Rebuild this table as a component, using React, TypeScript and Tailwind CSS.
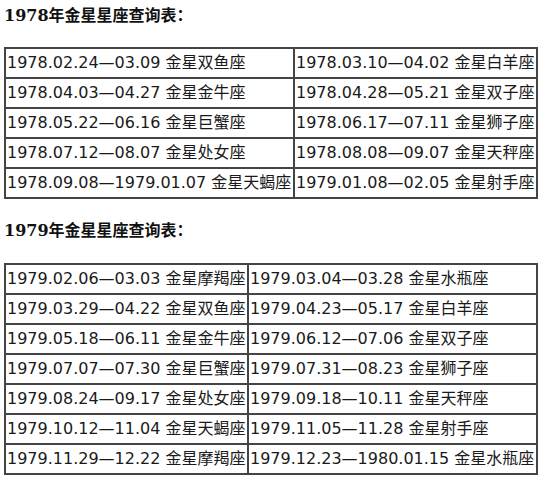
import React from 'react';

type Row = [string, string];

const table1978: Row[] = [
  ['1978.02.24—03.09 金星双鱼座', '1978.03.10—04.02 金星白羊座'],
  ['1978.04.03—04.27 金星金牛座', '1978.04.28—05.21 金星双子座'],
  ['1978.05.22—06.16 金星巨蟹座', '1978.06.17—07.11 金星狮子座'],
  ['1978.07.12—08.07 金星处女座', '1978.08.08—09.07 金星天秤座'],
  ['1978.09.08—1979.01.07 金星天蝎座', '1979.01.08—02.05 金星射手座'],
];

const table1979: Row[] = [
  ['1979.02.06—03.03 金星摩羯座', '1979.03.04—03.28 金星水瓶座'],
  ['1979.03.29—04.22 金星双鱼座', '1979.04.23—05.17 金星白羊座'],
  ['1979.05.18—06.11 金星金牛座', '1979.06.12—07.06 金星双子座'],
  ['1979.07.07—07.30 金星巨蟹座', '1979.07.31—08.23 金星狮子座'],
  ['1979.08.24—09.17 金星处女座', '1979.09.18—10.11 金星天秤座'],
  ['1979.10.12—11.04 金星天蝎座', '1979.11.05—11.28 金星射手座'],
  ['1979.11.29—12.22 金星摩羯座', '1979.12.23—1980.01.15 金星水瓶座'],
];

const Title = ({ children, className }: { children: React.ReactNode; className: string }) => (
  <h2
    className={`text-[16px] font-bold leading-[20px] text-[#111] ${className}`}
    style={{ fontFamily: '"DejaVu Serif", "Noto Sans CJK SC", serif' }}
  >
    {children}
  </h2>
);

// wide = column that holds the longest entry
const DateTable = ({ rows, wideFirst, className }: { rows: Row[]; wideFirst: boolean; className: string }) => (
  <div
    className={`grid w-fit border-l-2 border-t-2 border-[#444] text-[16px] text-[#1a1a1a] ${
      wideFirst ? 'grid-cols-[289px_243px]' : 'grid-cols-[243px_289px]'
    } ${className}`}
    style={{ fontFamily: '"DejaVu Sans", "Noto Sans CJK SC", sans-serif' }}
  >
    {rows.map((row, i) =>
      row.map((cell, j) => (
        <div
          key={`${i}-${j}`}
          className="flex h-[30px] items-center overflow-hidden whitespace-nowrap border-b-2 border-r-2 border-[#444] pl-[1px] leading-none"
        >
          {cell}
        </div>
      ))
    )}
  </div>
);

export default function App() {
  return (
    <div className="min-h-[490px] w-[555px] bg-white pl-[4px] pt-[6px]">
      <Title className="">1978年金星星座查询表：</Title>
      <DateTable rows={table1978} wideFirst className="mt-[21px]" />
      <Title className="mt-[22px]">1979年金星星座查询表：</Title>
      <DateTable rows={table1979} wideFirst={false} className="mt-[22px]" />
    </div>
  );
}
